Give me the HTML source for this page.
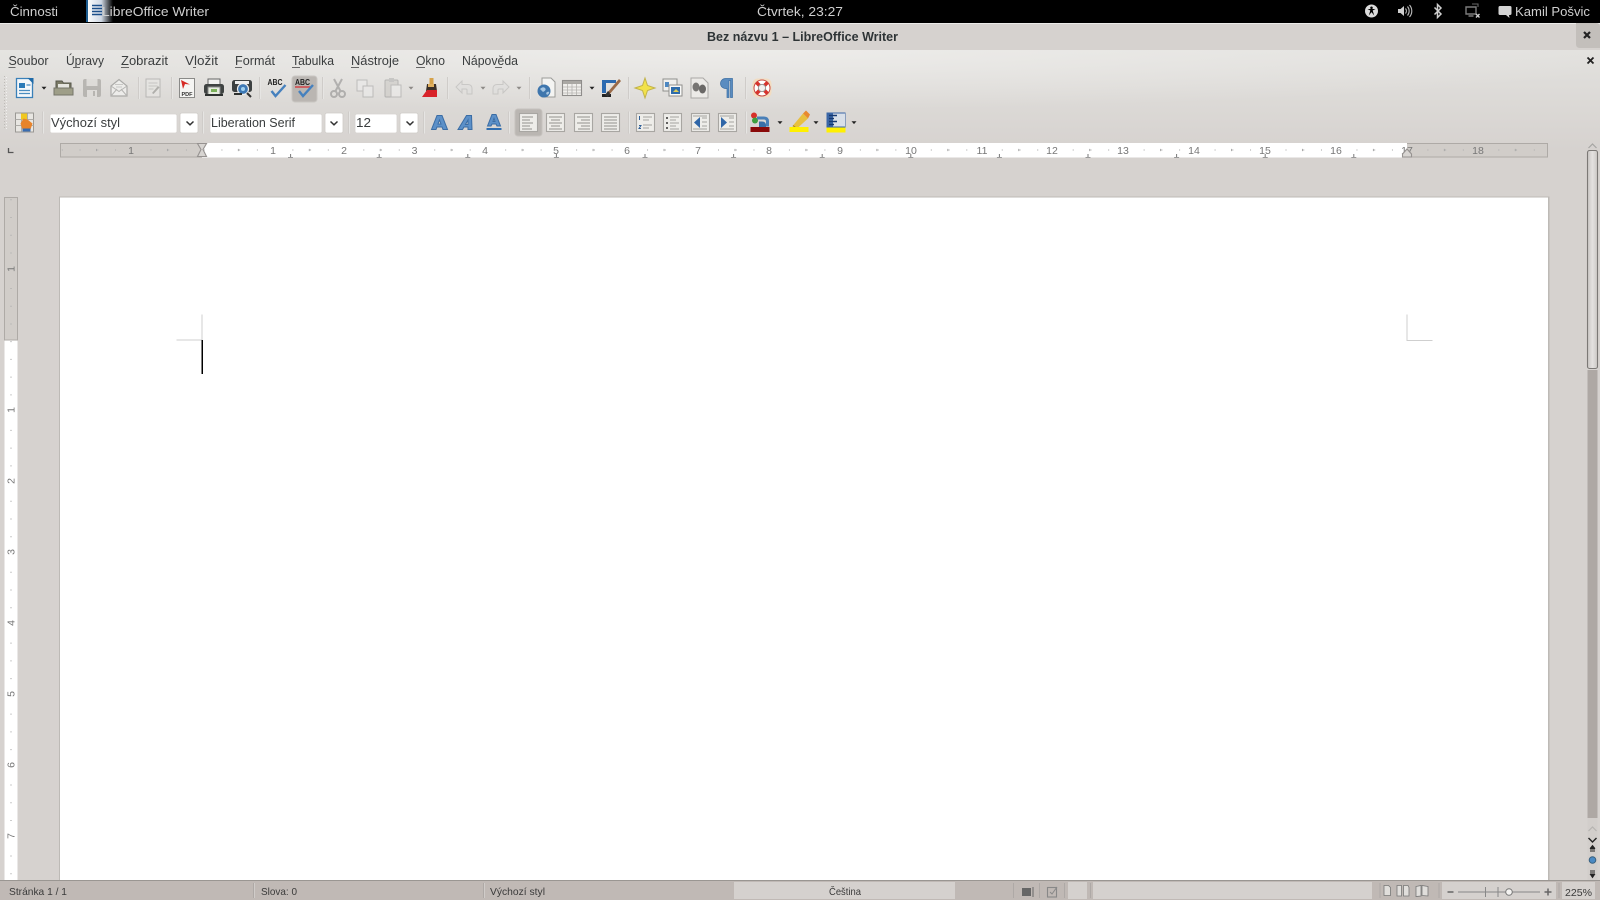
<!DOCTYPE html>
<html lang="cs">
<head>
<meta charset="utf-8">
<title>Bez názvu 1 – LibreOffice Writer</title>
<style>
html,body{margin:0;padding:0;width:1600px;height:900px;overflow:hidden;background:#d6d2cf}
svg{display:block;filter:blur(.3px)}
text{font-family:"Liberation Sans",sans-serif;fill:#2e3436}
.top{font-size:13px;fill:#cfcfcf}
.menu{font-size:13px;fill:#3a3d3e}
.st{font-size:10.5px;fill:#3a3a3a}
.rn{font-size:10.5px;fill:#777;text-anchor:middle}
.combo{font-size:13px;fill:#3a3d3e}
</style>
</head>
<body>
<svg xmlns="http://www.w3.org/2000/svg" width="1600" height="900" viewBox="0 0 1600 900">
<defs>
<linearGradient id="tb" x1="0" y1="0" x2="0" y2="1"><stop offset="0" stop-color="#e2e1de"/><stop offset="1" stop-color="#d6d2cf"/></linearGradient>
<radialGradient id="glow" cx="0.45" cy="0" r="0.6"><stop offset="0" stop-color="#f2f1ef" stop-opacity=".7"/><stop offset="1" stop-color="#f2f1ef" stop-opacity="0"/></radialGradient>
<linearGradient id="thumb" x1="0" y1="0" x2="1" y2="0"><stop offset="0" stop-color="#c9c5c2"/><stop offset=".5" stop-color="#e4e2e0"/><stop offset="1" stop-color="#cbc7c4"/></linearGradient>
<linearGradient id="app" x1="0" y1="0" x2="1" y2="0"><stop offset="0" stop-color="#fff"/><stop offset=".55" stop-color="#cfd8e4"/><stop offset="1" stop-color="#000"/></linearGradient>
<g id="dd"><path d="M-2.500-1.200H2.500L0 1.600Z" fill="#222"/></g>
<g id="ddg"><path d="M-2.500-1.200H2.500L0 1.600Z" fill="#8d8a87"/></g>
<g id="cv"><path d="M-3.500-1.500L0 1.800L3.500-1.500" fill="none" stroke="#333" stroke-width="1.500"/></g>
<g id="sep"><rect x="-1" y="-11" width="1" height="22" fill="#cfccc9"/><rect x="0" y="-11" width="1" height="22" fill="#e6e5e3"/></g>
</defs>

<!-- top bar -->
<rect width="1600" height="23" fill="#000"/>
<text class="top" x="10" y="16" textLength="48" lengthAdjust="spacingAndGlyphs">Činnosti</text>
<rect x="87" y="0" width="26" height="22" fill="url(#app)"/>
<rect x="86" y="0" width="2" height="22" fill="#1d5c8f"/>
<path d="M92 5.500h10M92 8.500h10M92 11.500h10M92 14.500h10" stroke="#1c4f8a" stroke-width="1.600"/>
<text class="top" x="102" y="16" textLength="107" lengthAdjust="spacingAndGlyphs">LibreOffice Writer</text>
<text class="top" x="757" y="16" textLength="86" lengthAdjust="spacingAndGlyphs">Čtvrtek, 23:27</text>
<circle cx="1371.500" cy="11" r="6.500" fill="#dcdcdc"/>
<path d="M1371.500 6.500a1.300 1.300 0 1 1-.01 0ZM1367.500 9l8 0-2.800 1.500 1.500 5-2.700-3.400-2.700 3.400 1.500-5Z" fill="#000"/>
<path d="M1398 9h2.500l3.500-3v10l-3.500-3H1398Z" fill="#cfcfcf"/>
<path d="M1405.500 8.500a4 4 0 0 1 0 5M1407.500 6.500a7 7 0 0 1 0 9M1409.500 5a9 9 0 0 1 0 12" fill="none" stroke="#bdbdbd" stroke-width="1.100"/>
<path d="M1434.500 7.500l6.500 6.500-3.500 3.500V4.500l3.500 3.500-6.500 6.500" fill="none" stroke="#cfcfcf" stroke-width="1.500"/>
<path d="M1466 7h10v7h-10Zm2.500 9h5" fill="none" stroke="#7c7c7c" stroke-width="1.400"/>
<path d="M1472 4h6v3" fill="none" stroke="#666" stroke-width="1.100"/>
<path d="M1476 14l3.500 3.500m0-3.500l-3.500 3.500" stroke="#d0d0d0" stroke-width="1.400"/>
<path d="M1500 6h10a1.500 1.500 0 0 1 1.500 1.500v6a1.500 1.500 0 0 1-1.500 1.500h-1l.5 3-3.500-3h-6a1.500 1.500 0 0 1-1.500-1.500v-6A1.500 1.500 0 0 1 1500 6Z" fill="#d4d4d4"/>
<text class="top" x="1515" y="16" textLength="75" lengthAdjust="spacingAndGlyphs">Kamil Pošvic</text>

<!-- title bar -->
<path d="M0 28q0-5 5-5H1595q5 0 5 5V50H0Z" fill="#d6d2cf"/>
<rect x="0" y="23" width="1600" height="1" fill="#ecebe9"/>
<text x="707" y="41" style="font-size:13px;font-weight:bold;fill:#2e3436" textLength="191" lengthAdjust="spacingAndGlyphs">Bez názvu 1 – LibreOffice Writer</text>
<path d="M1576 23h20q4 0 4 4v21h-20q-4 0-4-4Z" fill="#c3bfbb"/>
<path d="M1584 32l6 6m0-6l-6 6" stroke="#222" stroke-width="2.200"/>

<!-- toolbar bg -->
<rect x="0" y="50" width="1600" height="100" fill="url(#tb)"/>
<rect x="0" y="50" width="1600" height="100" fill="url(#glow)"/>
<rect x="0" y="150" width="1600" height="731" fill="#d6d2cf"/>
<path d="M1587.500 57.500l6 6m0-6l-6 6" stroke="#222" stroke-width="1.800"/>

<!-- menu -->
<text class="menu" x="8.500" y="65" textLength="40" lengthAdjust="spacingAndGlyphs">Soubor</text>
<text class="menu" x="66" y="65" textLength="38" lengthAdjust="spacingAndGlyphs">Úpravy</text>
<text class="menu" x="121" y="65" textLength="47" lengthAdjust="spacingAndGlyphs">Zobrazit</text>
<text class="menu" x="185" y="65" textLength="33" lengthAdjust="spacingAndGlyphs">Vložit</text>
<text class="menu" x="235" y="65" textLength="40" lengthAdjust="spacingAndGlyphs">Formát</text>
<text class="menu" x="292" y="65" textLength="42" lengthAdjust="spacingAndGlyphs">Tabulka</text>
<text class="menu" x="351" y="65" textLength="48" lengthAdjust="spacingAndGlyphs">Nástroje</text>
<text class="menu" x="416" y="65" textLength="29" lengthAdjust="spacingAndGlyphs">Okno</text>
<text class="menu" x="462" y="65" textLength="56" lengthAdjust="spacingAndGlyphs">Nápověda</text>
<path d="M8.500 67.500h7M73 67.500h7M121 67.500h8M193 67.500h3M235 67.500h7M292 67.500h8M351 67.500h8M416 67.500h9M495 67.500h7" stroke="#666" stroke-width="1"/>

<!-- grip dots -->
<path d="M4.500 76V130" stroke="#bdbab6" stroke-width="1" stroke-dasharray="1 2"/>
<path d="M6.500 77V130" stroke="#f2f1f0" stroke-width="1" stroke-dasharray="1 2"/>

<!-- highlighted buttons -->
<rect x="292" y="76" width="25" height="26" rx="3" fill="#bab6b2" stroke="#c9c6c2"/>
<rect x="515" y="109" width="27" height="27" rx="3" fill="#bab6b2" stroke="#c6c2be"/>

<!-- toolbar 1 icons -->
<g transform="translate(24.500 88)"><path d="M-8-9.500H5L8-6.500V9.500H-8Z" fill="#f4f7fa" stroke="#3a80b8" stroke-width="1.300"/><path d="M3-10h6v6Z" fill="#1f6aa8"/><rect x="-5.500" y="-5" width="6" height="5" fill="#2a7ab8"/><path d="M2-3h4M-5.500 2.500H5.500M-5.500 5.500H5.500" stroke="#4b8dc0" stroke-width="1.300"/></g>
<use href="#dd" x="44" y="88"/>
<g transform="translate(64 88)"><path d="M-8-7h6l1.500 2H7V5H-8Z" fill="#7a7a66" stroke="#55554a"/><rect x="-6" y="-4" width="11" height="6" fill="#e6e6e0"/><path d="M-10 0H9V7H-10Z" fill="#9e9e88" stroke="#75756a"/></g>
<g transform="translate(92 88)" opacity=".72"><rect x="-9" y="-9" width="18" height="18" rx="2" fill="#a9a7a3"/><rect x="-5.500" y="-9" width="11" height="7" fill="#dddbd8"/><rect x="-5" y="2" width="10" height="7" fill="#dedcd9"/><rect x="1" y="3" width="2" height="5" fill="#a9a7a3"/></g>
<g transform="translate(119 88)" opacity=".75"><path d="M-8-2L0-8.500 8-2V8H-8Z" fill="#f2f2f0" stroke="#9a9a98" stroke-width="1.200"/><path d="M-8-2L0 3.500 8-2M-8 8L-2 1M8 8L2 1" fill="none" stroke="#a8a8a6"/><path d="M-4-3.500h8M-3-1h6" stroke="#c0c0be"/></g>
<g transform="translate(153 88)" opacity=".55"><rect x="-7" y="-9" width="14" height="18" fill="#e9e9e6" stroke="#9a9a98"/><path d="M-4.500-5h9M-4.500-2h9M-4.500 1h5" stroke="#b0b0ae"/><path d="M-1 5L5-2l1.500 1.500-6 6.500Z" fill="#8a8a86"/></g>
<g transform="translate(187 88)"><rect x="-7.500" y="-9.500" width="15" height="19" fill="#f5f5f3" stroke="#8a8a88"/><path d="M-6-8L3-3.500-2-4-4 1Z" fill="#d62a24"/><text x="-5.500" y="8" style="font-size:5.500px;font-weight:bold;fill:#333">PDF</text></g>
<g transform="translate(214 88)"><rect x="-6" y="-9" width="12" height="6" fill="#f0f0ee" stroke="#666"/><rect x="-10" y="-4" width="20" height="10" rx="2.500" fill="#3f4342"/><rect x="-6" y="-1" width="12" height="8" fill="#e6ece0" stroke="#888"/><rect x="-3" y="1" width="6" height="3" fill="#7bb05a"/><rect x="-9" y="6" width="18" height="2" fill="#2e3130"/></g>
<g transform="translate(242 88)"><rect x="-10" y="-8" width="20" height="12" rx="2.500" fill="#3c4041"/><rect x="-7" y="-7" width="14" height="3" fill="#eee"/><circle cx="1" cy="1" r="5.500" fill="#3d78b5" stroke="#eee" stroke-width="1.200"/><circle cx="1" cy="1" r="2" fill="#9fd0ef"/><path d="M5 5l4 4" stroke="#333" stroke-width="2"/><rect x="-8" y="5" width="8" height="2" fill="#2e3130"/></g>
<g transform="translate(276.500 88)"><text x="-9" y="-3" style="font-size:8px;font-weight:bold;fill:#222" textLength="15" lengthAdjust="spacingAndGlyphs">ABC</text><path d="M-5 3L-1 8 9-3" fill="none" stroke="#4681be" stroke-width="2.400"/></g>
<g transform="translate(304 88)"><text x="-9" y="-3" style="font-size:8px;font-weight:bold;fill:#222" textLength="15" lengthAdjust="spacingAndGlyphs">ABC</text><path d="M-9-1H7" stroke="#d8272d" stroke-width="1.200"/><path d="M-5 3L-1 8 9-3" fill="none" stroke="#4681be" stroke-width="2.400"/></g>
<use href="#sep" x="139" y="88"/><use href="#sep" x="172" y="88"/><use href="#sep" x="260" y="88"/><use href="#sep" x="323" y="88"/><use href="#sep" x="448" y="88"/><use href="#sep" x="530" y="88"/><use href="#sep" x="629" y="88"/><use href="#sep" x="746" y="88"/>
<g transform="translate(338 88)" opacity=".45"><path d="M-4-9L3 4M4-9L-3 4" stroke="#777" stroke-width="2"/><circle cx="-4" cy="6" r="3" fill="none" stroke="#777" stroke-width="2"/><circle cx="4" cy="6" r="3" fill="none" stroke="#777" stroke-width="2"/></g>
<g transform="translate(365 88)" opacity=".5"><rect x="-8" y="-8" width="10" height="11" fill="#eee" stroke="#999"/><rect x="-2" y="-2" width="10" height="11" fill="#eee" stroke="#999"/></g>
<g transform="translate(393 88)" opacity=".5"><rect x="-8" y="-8" width="13" height="17" rx="1" fill="#c9c7c2" stroke="#888"/><rect x="-4" y="-10" width="5" height="4" fill="#aaa"/><rect x="-2" y="-3" width="10" height="12" fill="#f0f0ee" stroke="#999"/></g>
<use href="#ddg" x="411" y="88"/>
<g transform="translate(431 88)"><rect x="-1.500" y="-10" width="4" height="6" fill="#d6a24a"/><path d="M-4-4H5L6 3H-5Z" fill="#3a2f28"/><path d="M-3-4H3L3-1H-3Z" fill="#e0b060"/><path d="M-9 9L-4 2H6L6 9Z" fill="#d8232a"/></g>
<g transform="translate(464 88)" opacity=".28"><path d="M-8-1L-2-7V-3.500H4Q8-3.500 8 1V6H3V2Q3 1 2 1H-2V5Z" fill="#ddd" stroke="#888"/></g>
<use href="#ddg" x="483" y="88"/>
<g transform="translate(501 88)" opacity=".28"><path d="M8-1L2-7V-3.500H-4Q-8-3.500-8 1V6H-3V2Q-3 1-2 1H2V5Z" fill="#ddd" stroke="#888"/></g>
<use href="#ddg" x="519" y="88"/>
<g transform="translate(546 88)"><path d="M-4-10H5L9-6V9H-4Z" fill="#f4f4f2" stroke="#9b9b98"/><circle cx="-2" cy="3" r="6.500" fill="#3f76ad"/><path d="M-6 1q3-3 5-1t-2 4Zm6 4q2-2 3-1t-2 3Z" fill="#a7c6e2"/></g>
<g transform="translate(572 88)"><rect x="-9.500" y="-7.500" width="19" height="15" fill="#f0efec" stroke="#8f8d8b" stroke-width="1.100"/><rect x="-9" y="-7" width="18" height="3" fill="#aaa8a4"/><path d="M-9-1H9M-9 2H9M-9 5H9M-4.500-4V7M0-4V7M4.500-4V7" stroke="#b4b2af" stroke-width=".8"/></g>
<use href="#dd" x="592" y="88"/>
<g transform="translate(611 88)"><path d="M-9-8H5V-5H-5V5H-9Z" fill="#2c6ab0"/><rect x="-9" y="6" width="9" height="3" fill="#222"/><path d="M-4 5L8-9l2 2L-2 7Z" fill="#9a6a48"/><path d="M-6 7L-3 3-1 5-3 9Z" fill="#333"/></g>
<g transform="translate(645 88)"><path d="M0-10L2.500-2.500 10 0 2.500 2.500 0 10-2.500 2.500-10 0-2.500-2.500Z" fill="#f2e24a" stroke="#c2b34a"/></g>
<g transform="translate(672 88)"><rect x="-9" y="-9" width="14" height="12" fill="#f0f0ee" stroke="#8f8f8c"/><rect x="-7" y="-6" width="4" height="5" fill="#4d88c2"/><rect x="-3" y="-3" width="13" height="11" fill="#fafaf8" stroke="#8f8f8c"/><rect x="-1" y="-1" width="9" height="7" fill="#2e6cab"/><path d="M1 4l3-3 3 3Z" fill="#dfcc55"/></g>
<g transform="translate(699 88)"><path d="M-8-10H4L9-5V10H-8Z" fill="#eceae7" stroke="#aaa8a5"/><ellipse cx="-3" cy="-1" rx="3.500" ry="4.500" fill="#777573"/><ellipse cx="3.500" cy="1" rx="3.500" ry="4.500" fill="#6a6866"/></g>
<g transform="translate(727.500 88)"><path d="M5-9.500H-2A5 5 0 0 0-2 .5H-.5V9.500H1.500V-7.500H3V9.500H5Z" fill="#5a8cc0" stroke="#3a6ea3" stroke-width=".7"/></g>
<g transform="translate(762 88)"><rect x="-9.500" y="-9.500" width="19" height="19" rx="5" fill="#f2dcc0"/><circle r="8" fill="#fff" stroke="#c64a42" stroke-width="1"/><path d="M-5.500-5.500L-2-2M5.500-5.500L2-2M-5.500 5.500L-2 2M5.500 5.500L2 2" stroke="#d8332c" stroke-width="3.600"/><circle r="3.600" fill="#f2f0ee" stroke="#999"/></g>

<!-- toolbar 2 -->
<g transform="translate(24.500 122.500)"><rect x="-9" y="-9.500" width="18" height="19" fill="#e8e6e2" stroke="#9a9894"/><path d="M-9-3H9M-9 3H9M-3-9V9M3-9V9" stroke="#aeaca8"/><rect x="-3.500" y="-9" width="6" height="6" fill="#f0c820"/><path d="M-1-4L3-3 8 1 6 7H-2L-4 1Z" fill="#e8842c"/><rect x="-2" y="6" width="8" height="3" fill="#3a6cb0"/></g>
<use href="#sep" x="43" y="122.500"/>
<rect x="50" y="114" width="127" height="19" rx="2" fill="#fff" stroke="#d6d3d0" stroke-width=".8"/>
<rect x="180" y="113" width="18" height="20" rx="2" fill="#fff" stroke="#cfccc8" stroke-width=".8"/><use href="#cv" x="190" y="123"/>
<use href="#sep" x="203" y="122.500"/>
<rect x="210" y="114" width="112" height="19" rx="2" fill="#fff" stroke="#d6d3d0" stroke-width=".8"/>
<rect x="325" y="113" width="18" height="20" rx="2" fill="#fff" stroke="#cfccc8" stroke-width=".8"/><use href="#cv" x="334" y="123"/>
<use href="#sep" x="349" y="122.500"/>
<rect x="355" y="114" width="42" height="19" rx="2" fill="#fff" stroke="#d6d3d0" stroke-width=".8"/>
<rect x="400" y="113" width="18" height="20" rx="2" fill="#fff" stroke="#cfccc8" stroke-width=".8"/><use href="#cv" x="410" y="123"/>
<text class="combo" x="51" y="127" textLength="69" lengthAdjust="spacingAndGlyphs">Výchozí styl</text>
<text class="combo" x="211" y="127" textLength="84" lengthAdjust="spacingAndGlyphs">Liberation Serif</text>
<text class="combo" x="356" y="127" textLength="15" lengthAdjust="spacingAndGlyphs">12</text>
<use href="#sep" x="424" y="122.500"/>
<path d="M431.500 129.500L437 115.500H442L447.500 129.500H443L442 127H437L436 129.500ZM438 124H441L439.500 120Z" fill="#5c90c8" stroke="#3a6ca4" stroke-width="1"/>
<path d="M458 129.500L466.500 115.500H471.500L472 129.500H468V127H464L462.500 129.500ZM465.500 124.500H468V120Z" fill="#5c90c8" stroke="#3a6ca4" stroke-width="1"/>
<path d="M487.500 126L492 114.500H496L500.500 126H497L496 124H492L491 126ZM493 121.500H495L494 118.500Z" fill="#5c90c8" stroke="#3a6ca4" stroke-width="1"/><rect x="486.500" y="128" width="15" height="2" fill="#2f6db0"/>
<use href="#sep" x="509" y="122.500"/>
<!-- alignment -->
<g fill="#eeede9" stroke="#a8a6a2" stroke-width="1.100">
<rect x="519.500" y="113.500" width="18" height="18"/><rect x="546.500" y="113.500" width="18" height="18"/><rect x="574.500" y="113.500" width="18" height="18"/>
<rect x="601.500" y="113.500" width="18" height="18"/>
<rect x="636.500" y="113.500" width="18" height="18"/><rect x="663.500" y="113.500" width="18" height="18"/><rect x="691.500" y="113.500" width="18" height="18"/><rect x="718.500" y="113.500" width="18" height="18"/>
</g>
<path d="M522 117h11M522 120h8M522 123h11M522 126h8M522 129h10" stroke="#a4a4a0" stroke-width="1.300"/>
<path d="M549 117h13M551 120h9M549 123h13M551 126h9M549 129h13" stroke="#a4a4a0" stroke-width="1.300"/>
<path d="M577 117h13M581 120h9M577 123h13M581 126h9M578 129h12" stroke="#a4a4a0" stroke-width="1.300"/>
<path d="M604 117h13M604 120h13M604 123h13M604 126h13M604 129h13" stroke="#a4a4a0" stroke-width="1.300"/>
<use href="#sep" x="629" y="122.500"/>
<path d="M643 117h9M643 120h6M643 125h9M643 128h6" stroke="#a4a4a0" stroke-width="1.100"/>
<path d="M639.500 116v4M639 125.500h2l-2 3h2" stroke="#2f5f98" stroke-width="1" fill="none"/>
<path d="M670 117h9M670 120h6M670 123h9M670 126h6M670 129h9" stroke="#a4a4a0" stroke-width="1.100"/>
<path d="M666 118h2M666 123h2M666 128h2" stroke="#333" stroke-width="1.400"/>
<path d="M702 118h5M702 122h5M702 126h5M693 129h14M693 116h14" stroke="#a4a4a0" stroke-width="1.100"/><path d="M700 117v11l-6-5.500Z" fill="#2f66a8"/>
<path d="M729 118h5M729 122h5M729 126h5M720 129h14M720 116h14" stroke="#a4a4a0" stroke-width="1.100"/><path d="M721 117v11l6-5.500Z" fill="#2f66a8"/>
<use href="#sep" x="746" y="122.500"/>
<g transform="translate(760 122.500)"><circle cx="-6" cy="-7" r="3" fill="#d8302a"/><circle cx="-5" cy="-2" r="3" fill="#3ea040"/><path d="M-3-6h7q5 0 5 5v5H6V-1q0-2-2-2H-3Z" fill="#4a80b8"/><path d="M-1-1H2Q6-1 6 3V5H-1Z" fill="#3a6fa8"/><rect x="-9.500" y="4.500" width="19" height="5" fill="#8a0a0a"/></g>
<use href="#dd" x="780" y="122.500"/>
<g transform="translate(799 122.500)"><path d="M-6 3L4-9 9-4-2 6H-7Z" fill="#e8c040"/><path d="M4-9L7-12 11-8 9-4Z" fill="#e88a30"/><path d="M-6 3L-2 6" stroke="#a08a2a"/><rect x="-9.500" y="4.500" width="19" height="5" fill="#fff000"/></g>
<use href="#dd" x="816" y="122.500"/>
<g transform="translate(836 122.500)"><rect x="-9.500" y="-10" width="19" height="15" fill="#3a66a6"/><rect x="-3" y="-9" width="12" height="13" fill="#d8dfe8"/><path d="M-7-7h8M-7-4h5M-7-1h8M-7 2h5" stroke="#163a72" stroke-width="1.400"/><rect x="-9.500" y="5" width="19" height="5" fill="#fff000"/></g>
<use href="#dd" x="854" y="122.500"/>

<!-- ruler corner -->
<path d="M8.500 148v4.500h5" fill="none" stroke="#555" stroke-width="1.300"/>

<!-- horizontal ruler -->
<rect x="60.500" y="143.500" width="1487" height="13.500" fill="#d1cdc9" stroke="#aeaaa6" stroke-width="1"/>
<rect x="202" y="143" width="1205" height="14.500" fill="#fff"/>
<path d="M61 150H1547" stroke="#b4b4b4" stroke-width="1.300" stroke-dasharray="1 16.735" stroke-dashoffset="-.8"/>
<path d="M61 150H1547" stroke="#a8a8a8" stroke-width="2.200" stroke-dasharray="1 69.940" stroke-dashoffset="-35"/>
<rect x="122" y="144" width="18" height="12" fill="#d1cdc9"/>
<text class="rn" x="131" y="154">1</text>
<g fill="#fff">
<rect x="266" y="144" width="14" height="12"/><rect x="337" y="144" width="14" height="12"/><rect x="407" y="144" width="14" height="12"/><rect x="478" y="144" width="14" height="12"/><rect x="549" y="144" width="14" height="12"/><rect x="620" y="144" width="14" height="12"/><rect x="691" y="144" width="14" height="12"/><rect x="762" y="144" width="14" height="12"/><rect x="833" y="144" width="14" height="12"/><rect x="903" y="144" width="16" height="12"/><rect x="974" y="144" width="16" height="12"/><rect x="1045" y="144" width="16" height="12"/><rect x="1116" y="144" width="16" height="12"/><rect x="1187" y="144" width="16" height="12"/><rect x="1258" y="144" width="16" height="12"/><rect x="1329" y="144" width="16" height="12"/>
</g>
<rect x="1469" y="144" width="18" height="12" fill="#d1cdc9"/>
<text class="rn" x="273" y="154">1</text><text class="rn" x="344" y="154">2</text><text class="rn" x="414.500" y="154">3</text><text class="rn" x="485" y="154">4</text><text class="rn" x="556" y="154">5</text><text class="rn" x="627" y="154">6</text><text class="rn" x="698" y="154">7</text><text class="rn" x="769" y="154">8</text><text class="rn" x="840" y="154">9</text><text class="rn" x="911" y="154">10</text><text class="rn" x="982" y="154">11</text><text class="rn" x="1052" y="154">12</text><text class="rn" x="1123" y="154">13</text><text class="rn" x="1194" y="154">14</text><text class="rn" x="1265" y="154">15</text><text class="rn" x="1336" y="154">16</text><text class="rn" x="1407" y="154">17</text><text class="rn" x="1478" y="154">18</text>
<path d="M290.600 154V157M379.200 154V157M467.800 154V157M556.400 154V157M645 154V157M733.600 154V157M822.200 154V157M910.800 154V157M999.400 154V157M1088 154V157M1176.600 154V157M1265.200 154V157M1353.800 154V157" stroke="#777" stroke-width="1"/>
<path d="M288 157.500h5M376.700 157.500h5M465.300 157.500h5M553.900 157.500h5M642.500 157.500h5M731.100 157.500h5M819.700 157.500h5M908.300 157.500h5M996.900 157.500h5M1085.500 157.500h5M1174.100 157.500h5M1262.700 157.500h5M1351.300 157.500h5" stroke="#999" stroke-width="1"/>
<path d="M197.500 143.500H206.500L203 149.500L206.500 156.500H197.500L201 149.500Z" fill="#d8d5d2" stroke="#969290" stroke-width="1.100"/>
<path d="M1402.500 157V154L1407 149L1411.500 154V157Z" fill="#d8d5d2" stroke="#969290" stroke-width="1.100"/>

<!-- vertical ruler -->
<rect x="4.500" y="197.500" width="13" height="683" fill="#fff"/>
<rect x="4.500" y="197.500" width="13" height="142.500" fill="#d1cdc9" stroke="#aeaaa6" stroke-width="1"/>
<path d="M11 198V880" stroke="#b0b0b0" stroke-width="1.300" stroke-dasharray="1 16.735" stroke-dashoffset="-1.300"/>
<g fill="#fff"><rect x="5" y="402" width="12" height="14"/><rect x="5" y="473" width="12" height="14"/><rect x="5" y="544" width="12" height="14"/><rect x="5" y="615" width="12" height="14"/><rect x="5" y="686" width="12" height="14"/><rect x="5" y="757" width="12" height="14"/><rect x="5" y="828" width="12" height="14"/></g>
<rect x="5" y="261" width="12" height="14" fill="#d1cdc9"/>
<text class="rn" transform="translate(14.500 269) rotate(-90)">1</text>
<text class="rn" transform="translate(14.500 410) rotate(-90)">1</text>
<text class="rn" transform="translate(14.500 481) rotate(-90)">2</text>
<text class="rn" transform="translate(14.500 552) rotate(-90)">3</text>
<text class="rn" transform="translate(14.500 623) rotate(-90)">4</text>
<text class="rn" transform="translate(14.500 694) rotate(-90)">5</text>
<text class="rn" transform="translate(14.500 765) rotate(-90)">6</text>
<text class="rn" transform="translate(14.500 836) rotate(-90)">7</text>

<!-- page -->
<rect x="59" y="196.500" width="1490.500" height="684" fill="#bdbab6"/>
<rect x="60" y="197.500" width="1488" height="684" fill="#fff"/>
<path d="M176.500 340H202M202 314.500V340M1407 314.500V340.500H1432.500" fill="none" stroke="#cfcfcf" stroke-width="1"/>
<rect x="201.500" y="340" width="1.500" height="34" fill="#000"/>

<!-- scrollbar -->
<path d="M1587.500 818V370h10V818Z" fill="#aea8a4"/>
<rect x="1587.500" y="150.500" width="10" height="218" rx="2" fill="url(#thumb)" stroke="#7c7976" stroke-width="1.100"/>
<path d="M1588.500 148l4-4 4 4" fill="none" stroke="#a6a6a3" stroke-width="1.200"/>
<rect x="1587.500" y="818" width="10" height="62" fill="#d2cecb"/>
<path d="M1588.500 831l4-4 4 4" fill="none" stroke="#b6b4b1" stroke-width="1.200"/>
<path d="M1588.500 838l4 4 4-4" fill="none" stroke="#222" stroke-width="1.400"/>
<path d="M1590 849h5M1592.500 845.500l-2 2.500h4ZM1590 851h5" stroke="#222" fill="#222"/>
<circle cx="1592.500" cy="860" r="3.300" fill="#4a8ac4" stroke="#38607e"/>
<path d="M1590 871h5M1590 873h5M1592.500 877.500l-2-3h4Z" stroke="#222" fill="#222"/>

<!-- status bar -->
<rect x="0" y="880" width="1600" height="20" fill="#c0b9b5"/>
<rect x="0" y="880" width="1600" height="1" fill="#9a9692"/>
<text class="st" x="9" y="895" textLength="58" lengthAdjust="spacingAndGlyphs">Stránka 1 / 1</text>
<rect x="253" y="883" width="1" height="15" fill="#aea9a6"/><rect x="254" y="883" width="1" height="15" fill="#d0ccc9"/>
<text class="st" x="261" y="895" textLength="36" lengthAdjust="spacingAndGlyphs">Slova: 0</text>
<rect x="483" y="883" width="1" height="15" fill="#aea9a6"/><rect x="484" y="883" width="1" height="15" fill="#d0ccc9"/>
<text class="st" x="490" y="895" textLength="55" lengthAdjust="spacingAndGlyphs">Výchozí styl</text>
<rect x="734" y="882" width="221" height="17" fill="#d5d1ce"/>
<text class="st" x="829" y="895" textLength="32" lengthAdjust="spacingAndGlyphs">Čeština</text>
<path d="M1013.500 883v15M1039.500 883v15M1064.500 883v15M1090.500 883v15M1380 883v15M1439 883v15M1559 883v15" stroke="#aea9a6" stroke-width="1"/>
<rect x="1022" y="888" width="9" height="8" fill="#666"/><path d="M1033 887v10" stroke="#666"/>
<rect x="1047.500" y="887.500" width="9" height="9.500" fill="none" stroke="#888" stroke-width="1.100"/><path d="M1050 892l2 2 5-7" fill="none" stroke="#888"/>
<rect x="1068" y="882" width="19" height="17" fill="#d5d1ce"/>
<rect x="1093" y="882" width="279" height="17" fill="#d5d1ce"/>
<path d="M1384 885.500h4.500l2 2v8h-6.500Z" fill="#e0dedb" stroke="#777" stroke-width=".8"/>
<path d="M1397 885.500h4.500v10.500H1397ZM1403.500 885.500h4.500l1 2v8.500h-5.500Z" fill="#e0dedb" stroke="#777" stroke-width=".8"/>
<path d="M1416 886.500l5-1v10.500l-5 .5ZM1422 885.500l6 1v9.500l-6-.5Z" fill="#e0dedb" stroke="#777" stroke-width=".8"/>
<rect x="1442" y="882" width="114" height="17" fill="#d5d1ce"/>
<path d="M1447.500 892h6" stroke="#666" stroke-width="1.500"/>
<path d="M1458 892h82M1485.500 887v10M1498 887v10" stroke="#888" stroke-width="1"/>
<circle cx="1509" cy="892" r="3.300" fill="#f4f3f1" stroke="#777"/>
<path d="M1544.500 892h7M1548 888.500v7" stroke="#666" stroke-width="1.500"/>
<rect x="1562" y="882" width="33" height="17" fill="#d5d1ce"/>
<text class="st" x="1565" y="896" textLength="27" lengthAdjust="spacingAndGlyphs">225%</text>
</svg>
</body>
</html>
